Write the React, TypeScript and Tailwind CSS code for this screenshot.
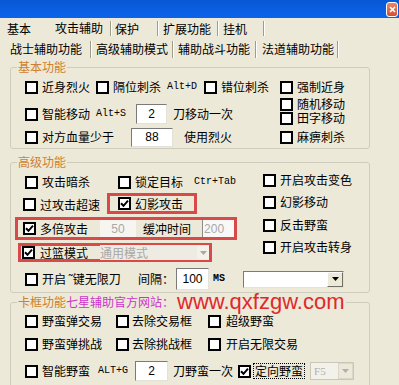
import React from "react";

function Box({ checked = false, className = "" }: { checked?: boolean; className?: string }) {
  return (
    <span
      className={
        "flex h-[13px] w-[13px] shrink-0 items-center justify-center border-2 border-black bg-white " + className
      }
    >
      {checked && (
        <svg width="9" height="9" viewBox="0 0 9 9">
          <path d="M1 4.2 L3.5 6.8 L8 1.6" fill="none" stroke="black" strokeWidth="2" />
        </svg>
      )}
    </span>
  );
}

function CB({
  label,
  checked = false,
  className = "",
  gap = "gap-[4px]",
  textClass = "leading-[14px]",
}: {
  label: React.ReactNode;
  checked?: boolean;
  className?: string;
  gap?: string;
  textClass?: string;
}) {
  return (
    <div className={"flex shrink-0 items-center " + gap + " " + className}>
      <Box checked={checked} />
      <span className={"whitespace-nowrap text-[12px] " + textClass}>{label}</span>
    </div>
  );
}

function Mono({ children, className = "" }: { children: React.ReactNode; className?: string }) {
  return (
    <span
      className={
        "shrink-0 whitespace-nowrap font-['Liberation_Mono',monospace] text-[10px] leading-[12px] " + className
      }
    >
      {children}
    </span>
  );
}

function Edit({
  children,
  className = "",
}: {
  children: React.ReactNode;
  className?: string;
}) {
  return (
    <div
      className={
        "flex shrink-0 items-center justify-center border border-t-[#7a7a7a] border-l-[#7a7a7a] border-r-[#e4e2d8] border-b-[#e4e2d8] bg-white font-['Liberation_Sans',sans-serif] text-[12px] leading-[14px] " +
        className
      }
    >
      {children}
    </div>
  );
}

function Divider({ h = "h-[15px]" }: { h?: string }) {
  return <span className={"w-[2px] shrink-0 border-l border-r border-l-[#a09c8c] border-r-white " + h} />;
}

function Group({
  label,
  className = "",
  children,
}: {
  label: React.ReactNode;
  className?: string;
  children: React.ReactNode;
}) {
  return (
    <div className={"relative ml-[10px] w-[360px] shrink-0 rounded-[3px] border border-[#cfccbd] " + className}>
      <div className="absolute left-[6px] top-[-8px] flex items-center bg-[#ece9d8] px-[1px]">{label}</div>
      {children}
    </div>
  );
}

function Arrow({ color = "black" }: { color?: string }) {
  return (
    <svg width="7" height="4" viewBox="0 0 7 4">
      <path d="M0 0 H7 L3.5 4 Z" fill={color} />
    </svg>
  );
}

export default function App() {
  return (
    <div className="flex h-[385px] w-[399px] flex-col overflow-hidden bg-[#ece9d8] font-['Noto_Sans_CJK_SC','Noto_Sans_CJK_SC',sans-serif] text-black">
      {/* title bar */}
      <div className="flex h-[18px] shrink-0 items-start justify-end bg-linear-to-b from-[#0858d6] to-[#0c63ea] pr-[1px] pt-[2px]">
        <div className="flex h-[15px] w-[12px] items-center justify-center rounded-[3px] border border-white bg-linear-to-b from-[#e8866a] to-[#d2502c]">
          <svg width="7" height="7" viewBox="0 0 7 7">
            <path d="M1 1 L6 6 M6 1 L1 6" stroke="white" strokeWidth="1.6" />
          </svg>
        </div>
      </div>

      {/* tab row 1 */}
      <div className="flex h-[21px] shrink-0 items-center text-[12px] leading-[14px]">
        <span className="w-[48px] pl-[7px] pt-[1px]">基本</span>
        <span className="w-[62px] pb-[1px] pl-[7px]">攻击辅助</span>
        <Divider />
        <span className="w-[45px] pl-[3px] pt-[1px]">保护</span>
        <Divider />
        <span className="w-[58px] pl-[4px] pt-[1px]">扩展功能</span>
        <Divider />
        <span className="w-[44px] pl-[4px] pt-[1px]">挂机</span>
        <Divider />
      </div>

      {/* tab row 2 */}
      <div className="flex h-[20px] shrink-0 items-center text-[12px] leading-[14px]">
        <span className="w-[90px] pl-[10px]">战士辅助功能</span>
        <Divider h="h-[17px]" />
        <span className="w-[80px] pl-[4px]">高级辅助模式</span>
        <Divider h="h-[17px]" />
        <span className="w-[81px] pl-[4px]">辅助战斗功能</span>
        <Divider h="h-[17px]" />
        <span className="w-[80px] pl-[5px]">法道辅助功能</span>
        <Divider h="h-[17px]" />
      </div>

      {/* 基本功能 */}
      <Group
        className="mt-[8px] h-[82px]"
        label={<span className="text-[12px] leading-[14px] text-[#cf7f2d]">基本功能</span>}
      >
        <div className="flex pl-[14px]">
          <div className="w-[255px] shrink-0">
            <div className="mt-[9px] flex h-[20px] items-center">
              <CB label="近身烈火" />
              <CB label="隔位刺杀" className="ml-[6px]" />
              <Mono className="ml-[6px]">Alt+D</Mono>
              <CB label="错位刺杀" className="ml-[7px]" />
            </div>
            <div className="mt-[6px] flex h-[22px] items-center">
              <CB label="智能移动" />
              <Mono className="ml-[6px]">Alt+S</Mono>
              <Edit className="ml-[10px] h-[20px] w-[31px]">2</Edit>
              <span className="ml-[6px] text-[12px] leading-[14px]">刀移动一次</span>
            </div>
            <div className="mt-[1px] flex h-[22px] items-center">
              <CB label="对方血量少于" />
              <Edit className="ml-[17px] h-[19px] w-[42px]">88</Edit>
              <span className="ml-[11px] text-[12px] leading-[14px]">使用烈火</span>
            </div>
          </div>
          <div className="flex flex-col">
            <CB label="强制近身" className="mt-[12px] h-[14px]" />
            <CB label="随机移动" className="mt-[3px] h-[14px]" textClass="leading-[12px]" />
            <CB label="田字移动" className="h-[14px]" textClass="leading-[12px]" />
            <CB label="麻痹刺杀" className="mt-[5px] h-[14px]" />
          </div>
        </div>
      </Group>

      {/* 高级功能 */}
      <Group
        className="mt-[13px] h-[131px]"
        label={<span className="text-[12px] leading-[14px] text-[#cf7f2d]">高级功能</span>}
      >
        <div className="flex">
          <div className="w-[252px] shrink-0">
            <div className="mt-[9px] flex h-[20px] items-center pl-[14px]">
              <CB label="攻击暗杀" />
              <CB label="锁定目标" className="ml-[28px]" />
              <Mono className="ml-[11px]">Ctr+Tab</Mono>
            </div>
            <div className="flex h-[22px] items-center pl-[12px]">
              <CB label="过攻击超速" className="mt-[3px]" />
              <div className="ml-[7px] flex h-[21px] w-[90px] items-center border-[3px] border-[#d84a4a] pl-[8px]">
                <CB label="幻影攻击" checked className="mt-[1px]" />
              </div>
            </div>
            <div className="ml-[4px] mt-[3px] flex h-[23px] w-[222px] items-center overflow-hidden border-[3px] border-[#d84a4a] pl-[5px]">
              <CB label="多倍攻击" checked />
              <div className="ml-[12px] flex h-[19px] w-[36px] shrink-0 items-center justify-center bg-[#f6f5f0] font-['Liberation_Sans',sans-serif] text-[12px] leading-[14px] text-[#a8a8a8]">
                50
              </div>
              <span className="ml-[7px] shrink-0 text-[12px] leading-[14px]">缓冲时间</span>
              <div className="ml-[11px] flex h-[17px] w-[32px] shrink-0 items-center border-l border-[#8a8a8a] bg-[#f8f8f6] pl-[1px] font-['Liberation_Sans',sans-serif] text-[12px] leading-[14px] text-[#a8a8a8]">
                200
              </div>
            </div>
            <div className="ml-[7px] mt-[3px] flex h-[19px] w-[194px] items-center border-[3px] border-[#d84a4a] pl-[1px]">
              <CB label="过篮模式" checked gap="gap-[5px]" />
              <div className="ml-[12px] flex h-[15px] flex-1 items-center justify-between bg-[#eeece2]">
                <span className="text-[12px] leading-[14px] text-[#a8a8a8]">通用模式</span>
                <span className="flex h-[13px] w-[12px] items-center justify-center bg-[#f2f1ea]">
                  <Arrow color="#a8a8a8" />
                </span>
              </div>
            </div>
          </div>
          <div className="flex flex-col">
            <CB label="开启攻击变色" className="mt-[10px] h-[14px]" />
            <CB label="幻影移动" className="mt-[8px] h-[14px]" />
            <CB label="反击野蛮" className="mt-[9px] h-[14px]" />
            <CB label="开启攻击转身" className="mt-[8px] h-[14px]" />
          </div>
        </div>
        <div className="mt-[6px] flex h-[22px] items-center pl-[14px]">
          <CB label={<span className="inline-block w-[81px]">开启 ˜键无限刀</span>} />
          <span className="ml-[15px] w-[36px] shrink-0 text-[12px] leading-[14px]">间隔：</span>
          <Edit className="ml-[2px] h-[22px] w-[33px]">100</Edit>
          <span className="ml-[4px] font-['Liberation_Mono',monospace] text-[10px] font-bold leading-[12px]">MS</span>
          <div className="ml-[18px] flex h-[17px] w-[101px] shrink-0 items-stretch border border-t-[#7a7a7a] border-l-[#7a7a7a] border-r-[#e4e2d8] border-b-[#e4e2d8] bg-white">
            <div className="flex-1" />
            <div className="flex w-[16px] items-center justify-center border border-t-white border-l-white border-r-[#716f64] border-b-[#716f64] bg-[#ece9d8]">
              <Arrow />
            </div>
          </div>
        </div>
      </Group>

      {/* 卡框功能 */}
      <Group
        className="mt-[9px] h-[100px]"
        label={
          <div className="flex items-center">
            <span className="text-[12px] leading-[14px] text-[#cf7f2d]">卡框功能</span>
            <span className="text-[12px] leading-[14px] text-[#cc33cc]">七星辅助官方网站：</span>
            <span className="ml-[3px] font-['Liberation_Sans',sans-serif] text-[22px] leading-[14px] text-[#e0282c]">
              www.qxfzgw.com
            </span>
          </div>
        }
      >
        <div className="pl-[14px]">
          <div className="mt-[11px] flex h-[14px] items-center">
            <div className="w-[91px] shrink-0">
              <CB label="野蛮弹交易" />
            </div>
            <div className="w-[92px] shrink-0">
              <CB label="去除交易框" gap="gap-[3px]" />
            </div>
            <CB label="超级野蛮" gap="gap-[5px]" />
          </div>
          <div className="mt-[9px] flex h-[14px] items-center">
            <div className="w-[91px] shrink-0">
              <CB label="野蛮弹挑战" />
            </div>
            <div className="w-[92px] shrink-0">
              <CB label="去除挑战框" gap="gap-[3px]" />
            </div>
            <CB label="开启无限交易" gap="gap-[5px]" />
          </div>
          <div className="mt-[10px] flex h-[20px] items-center">
            <CB label="智能野蛮" />
            <Mono className="ml-[8px]">ALT+G</Mono>
            <Edit className="ml-[7px] h-[20px] w-[33px]">2</Edit>
            <span className="ml-[5px] shrink-0 text-[12px] leading-[14px]">刀野蛮一次</span>
            <Box checked className="ml-[5px]" />
            <span className="ml-[2px] shrink-0 border border-dotted border-black px-[1px] text-[12px] leading-[14px]">
              定向野蛮
            </span>
            <div className="ml-[5px] flex h-[18px] w-[44px] shrink-0 items-stretch border border-[#c9c7ba] bg-[#f2f1ea]">
              <span className="flex-1 pl-[3px] font-['Liberation_Serif',serif] text-[11px] leading-[16px] text-[#b0b0b0]">
                F5
              </span>
              <span className="flex w-[15px] items-center justify-center border border-[#d9d7cc] bg-[#ece9d8]">
                <Arrow color="#b0b0b0" />
              </span>
            </div>
          </div>
        </div>
      </Group>
    </div>
  );
}
